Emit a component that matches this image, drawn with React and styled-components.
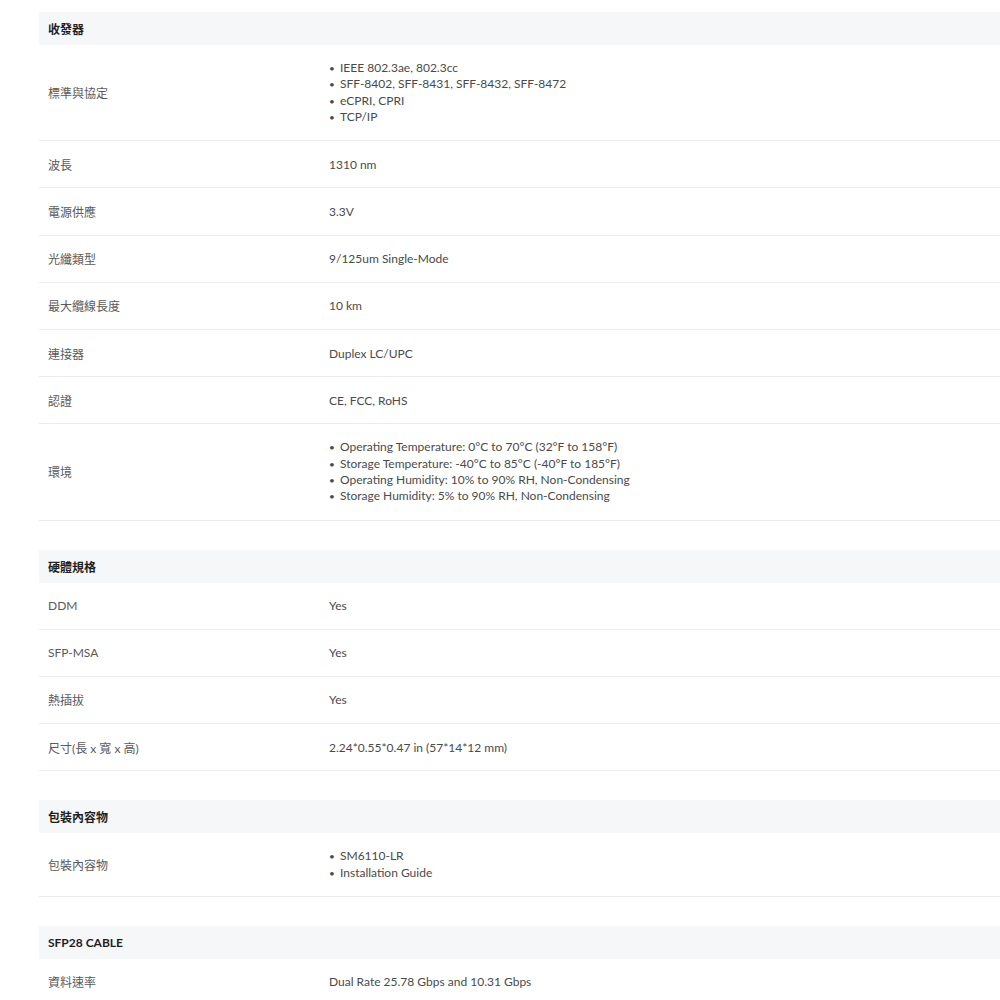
import React from 'react';
import styled, { createGlobalStyle } from 'styled-components';

const GlobalStyle = createGlobalStyle`
  html, body {
    margin: 0;
    padding: 0;
    background: #fff;
    overflow: hidden;
  }
  body {
    font-family: Lato, "Noto Sans CJK TC", sans-serif;
  }
`;

const sections = [
  {
    title: '收發器',
    rows: [
      { label: '標準與協定', list: ['IEEE 802.3ae, 802.3cc', 'SFF-8402, SFF-8431, SFF-8432, SFF-8472', 'eCPRI, CPRI', 'TCP/IP'] },
      { label: '波長', value: '1310 nm' },
      { label: '電源供應', value: '3.3V' },
      { label: '光纖類型', value: '9/125um Single-Mode' },
      { label: '最大纜線長度', value: '10 km' },
      { label: '連接器', value: 'Duplex LC/UPC' },
      { label: '認證', value: 'CE, FCC, RoHS' },
      {
        label: '環境',
        list: [
          'Operating Temperature: 0°C to 70°C (32°F to 158°F)',
          'Storage Temperature: -40°C to 85°C (-40°F to 185°F)',
          'Operating Humidity: 10% to 90% RH, Non-Condensing',
          'Storage Humidity: 5% to 90% RH, Non-Condensing',
        ],
      },
    ],
  },
  {
    title: '硬體規格',
    rows: [
      { label: 'DDM', value: 'Yes' },
      { label: 'SFP-MSA', value: 'Yes' },
      { label: '熱插拔', value: 'Yes' },
      { label: '尺寸(長 x 寬 x 高)', value: '2.24*0.55*0.47 in (57*14*12 mm)' },
    ],
  },
  {
    title: '包裝內容物',
    rows: [{ label: '包裝內容物', list: ['SM6110-LR', 'Installation Guide'] }],
  },
  {
    title: 'SFP28 CABLE',
    rows: [{ label: '資料速率', value: 'Dual Rate 25.78 Gbps and 10.31 Gbps' }],
  },
];

const Page = styled.div`
  padding: 12px 0 0 39px;
  width: 1100px;
`;

const Section = styled.section`
  margin-bottom: 29px;
`;

const Header = styled.div`
  height: 33px;
  display: flex;
  align-items: center;
  padding-left: 9px;
  background: #f6f7f9;
  font-size: 12px;
  font-weight: 700;
  color: #1f1f1f;
`;

const Row = styled.div`
  display: grid;
  grid-template-columns: 290px 1fr;
  align-items: center;
  min-height: 47.2px;
  padding: ${(p) => (p.$list ? '15px 0' : '0')};
  box-sizing: border-box;
  border-bottom: 1.5px solid #ececec;
  font-size: 12px;
  color: #555;
`;

const Label = styled.div`
  padding-left: 9px;
  color: #5a5a5a;
`;

const Value = styled.div`
  color: #4a4a4a;
`;

const List = styled.ul`
  list-style: none;
  margin: 0;
  padding: 0;
  line-height: 16.3px;
`;

const Item = styled.li`
  &::before {
    content: '•';
    display: inline-block;
    width: 11px;
    font-size: 10px;
  }
`;

export default function App() {
  return (
    <>
      <GlobalStyle />
      <Page>
        {sections.map((s) => (
          <Section key={s.title}>
            <Header>{s.title}</Header>
            {s.rows.map((r) => (
              <Row key={r.label} $list={!!r.list}>
                <Label>{r.label}</Label>
                <Value>
                  {r.list ? (
                    <List>
                      {r.list.map((i) => (
                        <Item key={i}>{i}</Item>
                      ))}
                    </List>
                  ) : (
                    r.value
                  )}
                </Value>
              </Row>
            ))}
          </Section>
        ))}
      </Page>
    </>
  );
}
